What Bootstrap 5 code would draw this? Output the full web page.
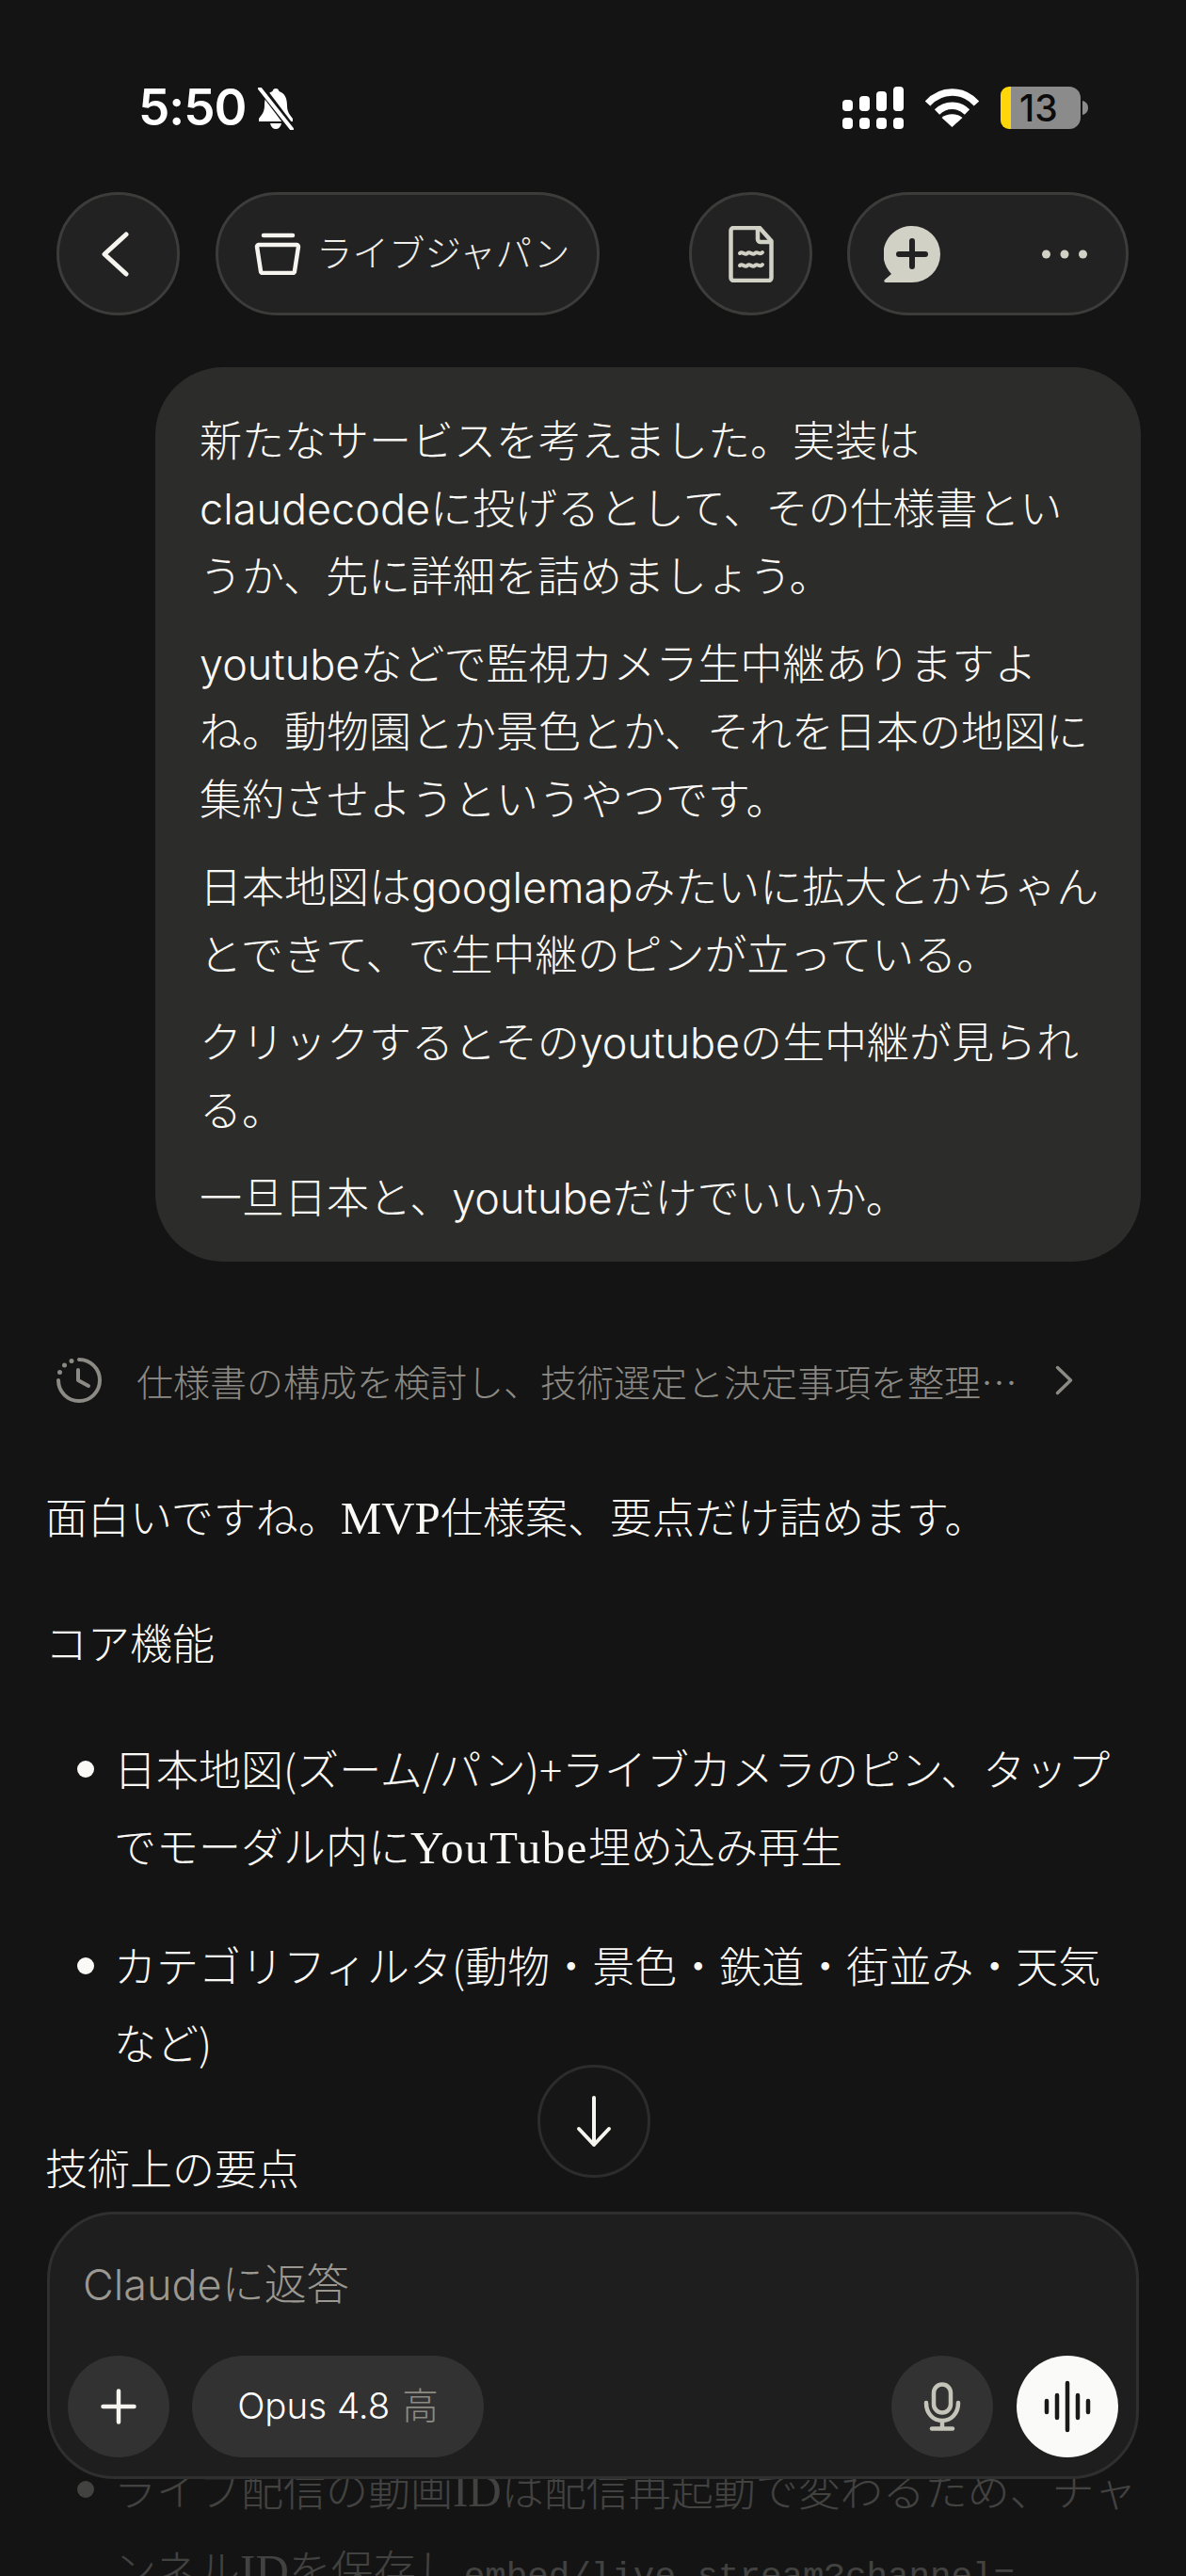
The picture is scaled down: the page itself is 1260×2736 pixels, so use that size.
<!DOCTYPE html>
<html lang="ja">
<head>
<meta charset="UTF-8">
<title>ライブジャパン</title>
<link href="https://cdn.jsdelivr.net/npm/bootstrap@5.3.0/dist/css/bootstrap.min.css" rel="stylesheet">
<style>
html, body { height: 2736px; overflow: hidden; }
body { background: #141414; color: #faf9f5; font-family: Inter, "Noto Sans CJK JP", sans-serif; font-weight: 300; position: relative; }
.status-row { height: 204px; padding: 0 104px 0 147px; align-items: flex-start; }
.clock { font-size: 53px; line-height: 1; font-weight: 600; color: #fff; margin-top: 88px; letter-spacing: -1px; }
.bell-icon { margin: 93px 0 0 11px; }
.status-icons { margin-top: 92px; gap: 23px; }
.head-row { height: 131px; padding: 0 61px 0 60px; }
.glass { background: #222; border: 3px solid #3c3c3b; border-radius: 66px; height: 131px; }
.glass-round { width: 131px; flex: none; }
.back-icon { margin-right: 6px; }
.title-pill { width: 408px; margin-left: 38px; padding-left: 38px; gap: 16px; font-size: 38.500px; color: #f0efea; white-space: nowrap; }
.doc-btn { margin-left: auto; }
.actions-pill { width: 299px; margin-left: 37px; padding: 0 41px 0 36px; }
.bubble { background: #2c2c2a; border-radius: 72px; margin: 55px 48px 0 165px; padding: 43px 42px 34px 47px; font-size: 45px; line-height: 72px; height: 950px; }
.bubble p { margin: 0 0 21px; }
.bubble p:last-child { margin: 0; }
.think-row { margin: 91px 0 0 60px; height: 70px; color: #8c8a84; font-size: 39px; white-space: nowrap; }
.think-label { margin: 0 40px 0 37px; font-family: "Noto Sans CJK JP", sans-serif; }
.reply { padding: 0 48px 0 48px; font-size: 45px; line-height: 82px; font-family: "Noto Sans CJK JP", sans-serif; }
.reply p { margin: 0; }
.serif-latin { font-family: "Liberation Serif", serif; font-size: 49px; }
.tube-word { letter-spacing: 1.500px; }
.lead-line { margin-top: 68px !important; }
.sect-line { margin-top: 48.500px !important; }
.reply ul { margin: 52px 0 0; padding: 0 0 0 73px; list-style: none; }
.reply li { margin-bottom: 42px; position: relative; }
.reply li:last-child { margin-bottom: 51px; }
.reply li::before { content: ""; position: absolute; left: -39px; top: 33px; width: 18px; height: 18px; border-radius: 50%; background: #faf9f5; }
.reply ul.hidden-gap { margin-top: 259px; }
.code-text { font-family: "Liberation Mono", monospace; font-size: 37.500px; margin-left: 6px; }
.fade-layer { position: absolute; left: 0; right: 0; top: 2620px; bottom: 0; background: rgba(20,20,20,.8); }
.down-btn { position: absolute; left: 571px; top: 2193px; width: 120px; height: 120px; background: #161616; border: 3px solid #2c2c2c; border-radius: 50%; }
.composer { position: absolute; left: 50px; top: 2349px; width: 1160px; height: 284px; background: #1e1e1e; border: 3px solid #2f2f2f; border-radius: 72px; }
.hint { position: absolute; left: 35px; top: 45px; font-size: 45px; line-height: 60px; color: #9a9890; }
.tool-row { position: absolute; left: 19px; right: 19px; top: 150px; height: 108px; }
.tool-round { width: 108px; height: 108px; border-radius: 50%; background: #323232; flex: none; }
.model-pill { width: 310px; height: 108px; border-radius: 54px; background: #323232; margin-left: 24px; font-size: 38.500px; color: #fff; gap: 13px; }
.model-pill span { color: #8c8a84; }
.send-btn { background: #fafaf8; margin-left: 25px; }
</style>
</head>
<body>
<div class="d-flex justify-content-between status-row">
  <div class="d-flex align-items-start">
    <div class="clock">5:50</div>
    <svg class="bell-icon" width="41" height="45" viewBox="0 0 41 45"><path d="M20 1c-2 0-3 1-3.500 3C10 6 8 12 8 19c0 7-3 10-6 14v3h36v-3c-3-4-6-7-6-14 0-7-2-13-8.500-15C23 2 22 1 20 1zM14 38c1 4 3 6 6 6s5-2 6-6z" fill="#fff"/><path d="M4 0l34 45" stroke="#141414" stroke-width="8"/><path d="M3 1l34 43" stroke="#fff" stroke-width="4" stroke-linecap="round"/></svg>
  </div>
  <div class="d-flex align-items-start status-icons">
    <svg width="65" height="45" viewBox="0 0 65 45" fill="#fff"><rect x="0" y="14" width="11" height="12" rx="4"/><rect x="0" y="33" width="11" height="12" rx="4"/><rect x="18" y="10" width="11" height="16" rx="4"/><rect x="18" y="33" width="11" height="12" rx="4"/><rect x="36" y="5" width="11" height="21" rx="4"/><rect x="36" y="33" width="11" height="12" rx="4"/><rect x="54" y="0" width="11" height="26" rx="4"/><rect x="54" y="33" width="11" height="12" rx="4"/></svg>
    <svg width="57" height="45" viewBox="0 0 57 45" fill="none" stroke="#fff" stroke-width="7.500"><path d="M2.500 18C17 2 40 2 54.500 18"/><path d="M12.500 27c9-9 23-9 32 0"/><path fill="#fff" stroke="none" d="M28.500 43L17.500 33c6-5 16-5 22 0z"/></svg>
    <svg width="93" height="45" viewBox="0 0 93 45"><path d="M11 0h62a12 12 0 0 1 12 12v21a12 12 0 0 1-12 12H11z" fill="#8b8b8b"/><path d="M11 0H9a9 9 0 0 0-9 9v27a9 9 0 0 0 9 9h2z" fill="#ffd60a"/><path d="M87 15c4 1 6 4 6 7.500S91 29 87 30z" fill="#8b8b8b"/><text x="20" y="37" font-size="39" font-weight="500" font-family="Inter, sans-serif" fill="#0c0c0c">13</text></svg>
  </div>
</div>

<div class="d-flex align-items-center head-row">
  <div class="glass glass-round d-flex align-items-center justify-content-center">
    <svg class="back-icon" width="31" height="50" viewBox="0 0 31 50" fill="none" stroke="#f5f4ef" stroke-width="5" stroke-linecap="round" stroke-linejoin="round"><path d="M27 4L4 25l23 21"/></svg>
  </div>
  <div class="glass title-pill d-flex align-items-center">
    <svg width="50" height="45" viewBox="0 0 50 45" fill="none" stroke="#f5f4ef" stroke-width="4.500"><path d="M10 3h31" stroke-linecap="round"/><path d="M3 15a2 2 0 0 1 2-2h40a2 2 0 0 1 2 2l-4 26a2 2 0 0 1-2 2H9a2 2 0 0 1-2-2z" stroke-linejoin="round"/></svg>
    <span>ライブジャパン</span>
  </div>
  <div class="glass glass-round doc-btn d-flex align-items-center justify-content-center">
    <svg width="48" height="60" viewBox="0 0 48 60" fill="none" stroke="#d2d1c6" stroke-width="4.500" stroke-linejoin="round"><path d="M2.500 5a3 3 0 0 1 3-3H33l12.500 14v39a3 3 0 0 1-3 3h-37a3 3 0 0 1-3-3z"/><path d="M31 2v12a3 3 0 0 0 3 3h11.500"/><path d="M12 29c3-3 5 3 8 0s5 3 8 0 5 3 8-1M12 42c3-3 5 3 8 0s5 3 8 0 5 3 8-1" stroke-width="4" stroke-linecap="round"/></svg>
  </div>
  <div class="glass actions-pill d-flex align-items-center justify-content-between">
    <svg width="60" height="60" viewBox="0 0 60 60"><path d="M30 0a30 30 0 0 1 0 60H2c-2 0-2-2-1-3l7-6A30 30 0 0 1 30 0z" fill="#d2d1c6"/><path d="M30 16v27M16 30h28" stroke="#222" stroke-width="6" stroke-linecap="round"/></svg>
    <svg width="48" height="10" viewBox="0 0 48 10" fill="#d2d1c6"><circle cx="4.500" cy="5" r="4.500"/><circle cx="24" cy="5" r="4.500"/><circle cx="43.500" cy="5" r="4.500"/></svg>
  </div>
</div>

<div class="bubble">
  <p>新たなサービスを考えました。実装はclaudecodeに投げるとして、その仕様書というか、先に詳細を詰めましょう。</p>
  <p>youtubeなどで監視カメラ生中継ありますよね。動物園とか景色とか、それを日本の地図に集約させようというやつです。</p>
  <p>日本地図はgooglemapみたいに拡大とかちゃんとできて、で生中継のピンが立っている。</p>
  <p>クリックするとそのyoutubeの生中継が見られる。</p>
  <p>一旦日本と、youtubeだけでいいか。</p>
</div>

<div class="d-flex align-items-center think-row">
  <svg width="48" height="48" viewBox="0 0 48 48" fill="none" stroke="#8c8a84" stroke-width="4" stroke-linecap="round" stroke-linejoin="round"><path d="M24 2a22 22 0 1 1-22 22"/><path d="M23 13v11l11 6"/><path d="M3.500 15.500v.1M8.500 8v.1M16 3.500v.1" stroke-width="5"/></svg>
  <span class="think-label">仕様書の構成を検討し、技術選定と決定事項を整理…</span>
  <svg width="19" height="32" viewBox="0 0 19 32" fill="none" stroke="#8c8a84" stroke-width="3.500" stroke-linecap="round" stroke-linejoin="round"><path d="M2.500 2.500L16.500 16 2.500 29.500"/></svg>
</div>

<div class="reply">
  <p class="lead-line">面白いですね。<span class="serif-latin">MVP</span>仕様案、要点だけ詰めます。</p>
  <p class="sect-line">コア機能</p>
  <ul>
    <li>日本地図(ズーム/パン)+ライブカメラのピン、タップでモーダル内に<span class="serif-latin tube-word">YouTube</span>埋め込み再生</li>
    <li>カテゴリフィルタ(動物・景色・鉄道・街並み・天気など)</li>
  </ul>
  <p class="sect-line">技術上の要点</p>
  <ul class="hidden-gap">
    <li>ライブ配信の動画<span class="serif-latin">ID</span>は配信再起動で変わるため、チャンネル<span class="serif-latin">ID</span>を保存し<span class="code-text">embed/live_stream?channel=</span></li>
  </ul>
</div>

<div class="fade-layer"></div>

<div class="down-btn d-flex align-items-center justify-content-center">
  <svg width="44" height="56" viewBox="0 0 44 56" fill="none" stroke="#f5f4ef" stroke-width="4" stroke-linecap="round" stroke-linejoin="round"><path d="M22 3v50M6 36l16 17 16-17"/></svg>
</div>

<div class="composer">
  <div class="hint">Claudeに返答</div>
  <div class="d-flex align-items-center tool-row">
    <div class="tool-round d-flex align-items-center justify-content-center">
      <svg width="38" height="38" viewBox="0 0 38 38" stroke="#f5f4ef" stroke-width="4.500" stroke-linecap="round"><path d="M19 2.500v33M2.500 19h33"/></svg>
    </div>
    <div class="model-pill d-flex align-items-center justify-content-center">Opus 4.8 <span>高</span></div>
    <div class="tool-round ms-auto d-flex align-items-center justify-content-center">
      <svg width="40" height="52" viewBox="0 0 40 52" fill="none" stroke="#c5c4b9" stroke-width="4.500" stroke-linecap="round"><rect x="11" y="2.500" width="18" height="30" rx="9"/><path d="M3 22c0 12 8 19 17 19s17-7 17-19M20 41v8"/><path d="M9 49.500h22" stroke-width="4.500"/></svg>
    </div>
    <div class="tool-round send-btn d-flex align-items-center justify-content-center">
      <svg width="50" height="56" viewBox="0 0 50 56" stroke="#1a1a1a" stroke-width="4.500" stroke-linecap="round"><path d="M3 22v12M14 16v24M25 3v50M36 16v24M47 22v12"/></svg>
    </div>
  </div>
</div>

<script src="https://cdn.jsdelivr.net/npm/bootstrap@5.3.0/dist/js/bootstrap.bundle.min.js"></script>
</body>
</html>
